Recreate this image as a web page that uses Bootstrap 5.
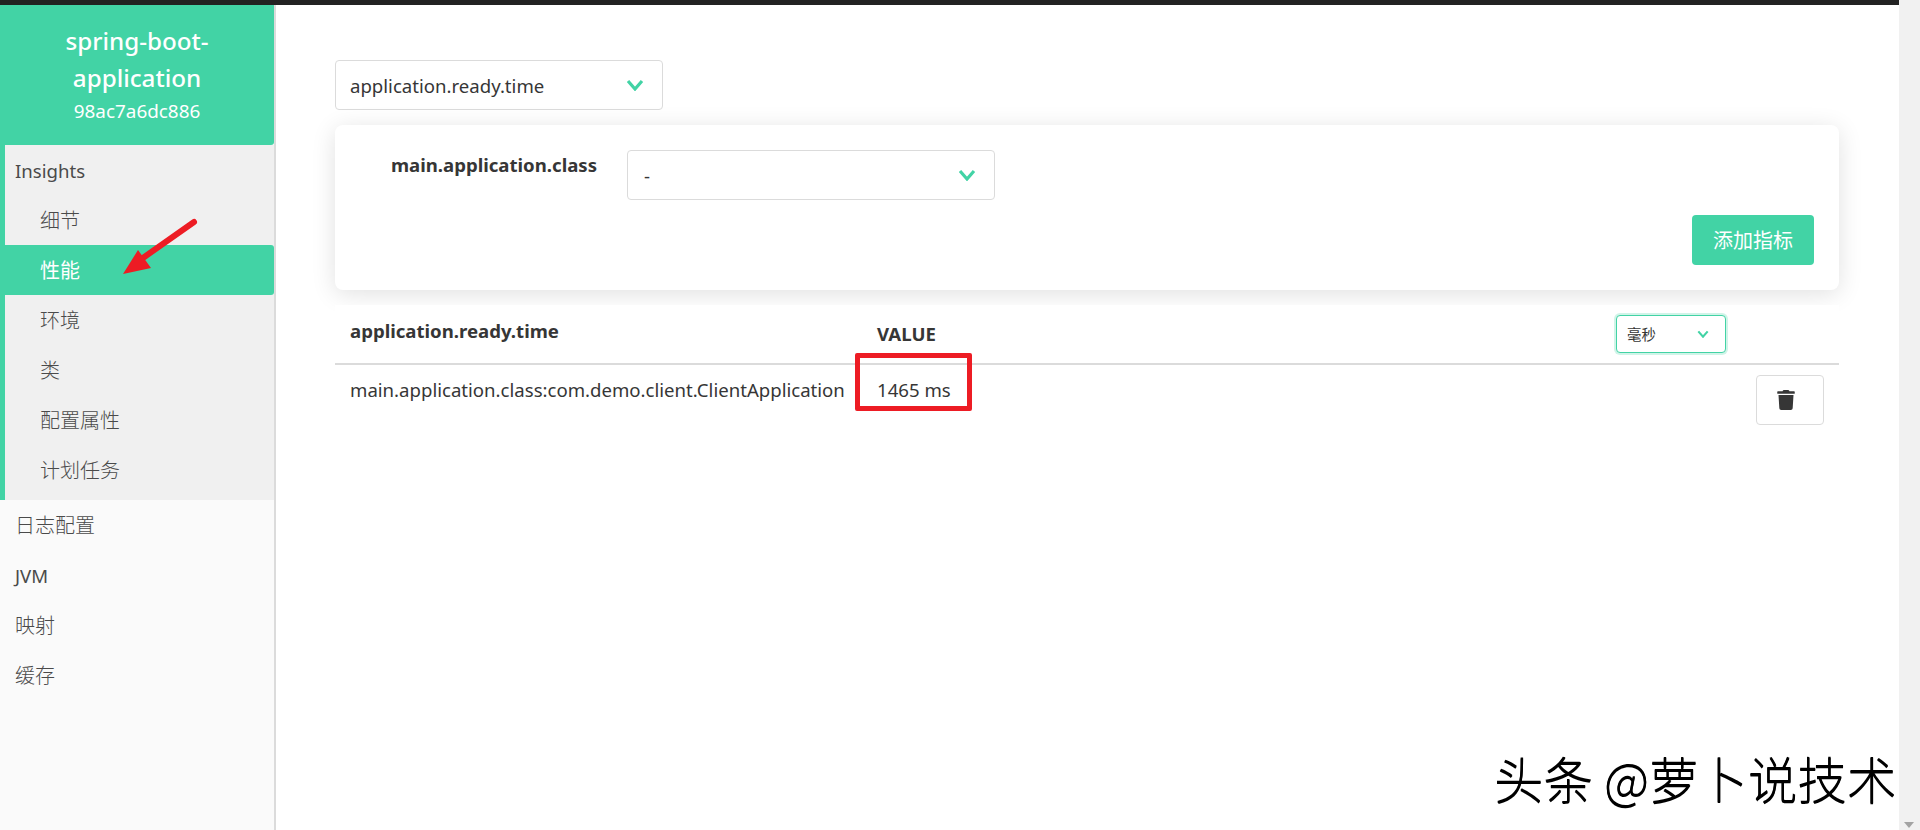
<!DOCTYPE html>
<html lang="zh">
<head>
    <meta charset="UTF-8">
    <meta name="viewport" content="width=device-width, initial-scale=1.0">
    <title>性能</title>
    <link rel="stylesheet" href="https://cdn.jsdelivr.net/npm/bootstrap@5.3.0/dist/css/bootstrap.min.css">
    <style>
        html, body {
            height: 830px;
            overflow: hidden;
        }

        body {
            font-family: "Noto Sans", "Noto Sans CJK SC", sans-serif;
            font-size: 18.6px;
            color: #363636;
            background-color: #fff;
        }

        .top-strip {
            height: 5px;
            background-color: #222;
        }

        .page-wrap {
            height: 825px;
        }

        .side-menu {
            width: 276px;
            background-color: #fafafa;
            border-right: 2px solid #dbdbdb;
        }

        .side-head {
            height: 140px;
            padding-top: 17px;
            background-color: #42d3a5;
            color: #fff;
            text-align: center;
            border-radius: 0 0 3px 0;
        }

        .side-title {
            font-size: 24.2px;
            font-weight: 500;
            line-height: 37px;
        }

        .side-sub {
            font-size: 18.9px;
            line-height: 30px;
        }

        .side-group {
            padding-bottom: 5px;
            background-color: #f0f0f0;
            border-left: 5px solid #42d3a5;
        }

        .side-link {
            display: block;
            height: 50px;
            line-height: 52px;
            padding-left: 15px;
            color: #4a4a4a;
            text-decoration: none;
        }

        .cjk-text {
            font-size: 20px;
            font-weight: 300;
        }

        .side-group .side-link {
            padding-left: 10px;
        }

        .side-group .side-child {
            padding-left: 35px;
        }

        .side-group .side-on {
            margin-left: -5px;
            padding-left: 40px;
            background-color: #42d3a5;
            color: #fff;
            font-weight: 400;
            border-radius: 0 3px 3px 0;
        }

        .main-pane {
            padding: 55px 81px 0 59px;
        }

        .pick {
            height: 50px;
            padding: 2px 40px 0 14px;
            font-size: 18.6px;
            color: #363636;
            border: 1px solid #dbdbdb;
            border-radius: 4px;
            background-image: url("data:image/svg+xml,%3Csvg xmlns='http://www.w3.org/2000/svg' viewBox='0 0 18 12'%3E%3Cpath d='M2 2l7 8 7-8' fill='none' stroke='%2342d3a5' stroke-width='3.2'/%3E%3C/svg%3E");
            background-position: right 18px center;
            background-size: 18px 12px;
        }

        .pick-metric {
            width: 328px;
        }

        .pick-tag {
            width: 368px;
            padding-left: 16px;
        }

        .pick-unit {
            width: 110px;
            height: 38px;
            padding-left: 10px;
            font-size: 14.4px;
            border-color: #42d3a5;
            box-shadow: 0 0 0 2px rgba(66, 211, 165, 0.25);
            background-position: right 16px center;
            background-size: 12px 8px;
        }

        .add-panel {
            height: 165px;
            margin-top: 15px;
            border: 0;
            border-radius: 8px;
            box-shadow: 0 4px 24px rgba(10, 10, 10, 0.12);
        }

        .tag-row {
            padding-top: 25px;
            gap: 30px;
        }

        .tag-label {
            width: 262px;
            padding-top: 3px;
            font-weight: 700;
            text-align: right;
            line-height: 24px;
        }

        .add-row {
            padding: 15px 25px 0 0;
        }

        .btn-add {
            width: 122px;
            height: 50px;
            padding-top: 8px;
            font-size: 20px;
            color: #fff;
            background-color: #42d3a5;
            border: 0;
            border-radius: 4px;
        }

        .metric-table {
            width: 1504px;
            margin-top: 15px;
            position: relative;
            background-color: #fff;
            table-layout: fixed;
        }

        .col-name {
            width: 527px;
        }

        .col-value {
            width: 739px;
        }

        .col-action {
            width: 238px;
        }

        .metric-table th,
        .metric-table td {
            padding: 10px 15px;
            color: #363636;
            font-size: 18.6px;
            box-shadow: none;
        }

        .metric-table thead th {
            height: 59px;
            border-bottom: 2px solid #dbdbdb;
            vertical-align: middle;
        }

        .metric-table thead th.name-head {
            padding-bottom: 16px;
        }

        .metric-table tbody td {
            border-bottom: 0;
        }

        .metric-table tbody td.cell-text {
            padding-top: 11px;
        }

        .btn-trash {
            width: 68px;
            height: 50px;
            padding: 0;
            background-color: #fff;
            border: 1px solid #dbdbdb;
            border-radius: 4px;
        }

        .btn-trash svg {
            width: 18px;
            height: 20px;
            fill: #363636;
            display: block;
            margin-left: 20px;
        }

        .fake-scroll {
            width: 21px;
            background-color: #f1f1f1;
            position: fixed;
            top: 0;
            right: 0;
            bottom: 0;
        }

        .fake-scroll::after {
            content: "";
            position: absolute;
            left: 5px;
            bottom: 2px;
            border: 5px solid transparent;
            border-top: 6px solid #a3a3a3;
            border-bottom: 0;
        }

        .red-box {
            position: absolute;
            left: 855px;
            top: 353px;
            width: 117px;
            height: 58px;
            border: 5px solid #ed1c24;
            border-radius: 2px;
        }

        .red-arrow {
            position: absolute;
            left: 110px;
            top: 210px;
            width: 90px;
            height: 70px;
        }

        .watermark {
            position: absolute;
            left: 1494px;
            top: 748px;
            font-family: "Noto Sans CJK SC", sans-serif;
            font-size: 49.5px;
            font-weight: 300;
            line-height: 60px;
            color: #000;
            text-shadow: 0 1px 0 #000;
            white-space: nowrap;
        }
    </style>
</head>
<body>

<div class="top-strip"></div>

<div class="page-wrap d-flex">
    <aside class="side-menu flex-shrink-0">
        <div class="side-head">
            <div class="side-title">spring-boot-<br>application</div>
            <div class="side-sub">98ac7a6dc886</div>
        </div>
        <nav class="side-group">
            <a class="side-link" href="#">Insights</a>
            <a class="side-link side-child cjk-text" href="#">细节</a>
            <a class="side-link side-child side-on cjk-text" href="#">性能</a>
            <a class="side-link side-child cjk-text" href="#">环境</a>
            <a class="side-link side-child cjk-text" href="#">类</a>
            <a class="side-link side-child cjk-text" href="#">配置属性</a>
            <a class="side-link side-child cjk-text" href="#">计划任务</a>
        </nav>
        <nav>
            <a class="side-link cjk-text" href="#">日志配置</a>
            <a class="side-link" href="#">JVM</a>
            <a class="side-link cjk-text" href="#">映射</a>
            <a class="side-link cjk-text" href="#">缓存</a>
        </nav>
    </aside>

    <main class="main-pane flex-grow-1">
        <select class="form-select pick pick-metric">
            <option>application.ready.time</option>
        </select>

        <div class="card add-panel">
            <div class="card-body p-0 d-flex flex-column">
                <div class="d-flex tag-row">
                    <div class="tag-label">main.application.class</div>
                    <select class="form-select pick pick-tag">
                        <option>-</option>
                    </select>
                </div>
                <div class="d-flex justify-content-end add-row">
                    <button class="btn btn-add" type="button">添加指标</button>
                </div>
            </div>
        </div>

        <table class="table metric-table mb-0">
            <colgroup>
                <col class="col-name">
                <col class="col-value">
                <col class="col-action">
            </colgroup>
            <thead>
                <tr>
                    <th class="name-head">application.ready.time</th>
                    <th>VALUE</th>
                    <th>
                        <select class="form-select pick pick-unit">
                            <option>毫秒</option>
                        </select>
                    </th>
                </tr>
            </thead>
            <tbody>
                <tr>
                    <td class="cell-text">main.application.class:com.demo.client.ClientApplication</td>
                    <td class="cell-text">1465 ms</td>
                    <td class="text-end">
                        <button class="btn btn-trash" type="button" aria-label="删除">
                            <svg viewBox="0 0 448 512"><path d="M432 32H312l-9.4-18.7A24 24 0 0 0 281.1 0H166.8a23.72 23.72 0 0 0-21.4 13.3L136 32H16A16 16 0 0 0 0 48v32a16 16 0 0 0 16 16h416a16 16 0 0 0 16-16V48a16 16 0 0 0-16-16zM53.2 467a48 48 0 0 0 47.9 45h245.8a48 48 0 0 0 47.9-45L416 128H32z"/></svg>
                        </button>
                    </td>
                </tr>
            </tbody>
        </table>
    </main>
</div>

<div class="fake-scroll"></div>

<!-- annotations drawn over the screenshot -->
<svg class="red-arrow" viewBox="0 0 90 70">
    <path d="M84 12L30 50" stroke="#ed1c24" stroke-width="6" stroke-linecap="round" fill="none"/>
    <path d="M13 64L28 40 41 58z" fill="#ed1c24"/>
</svg>
<div class="red-box"></div>
<div class="watermark">头条 @萝卜说技术</div>

</body>
</html>
